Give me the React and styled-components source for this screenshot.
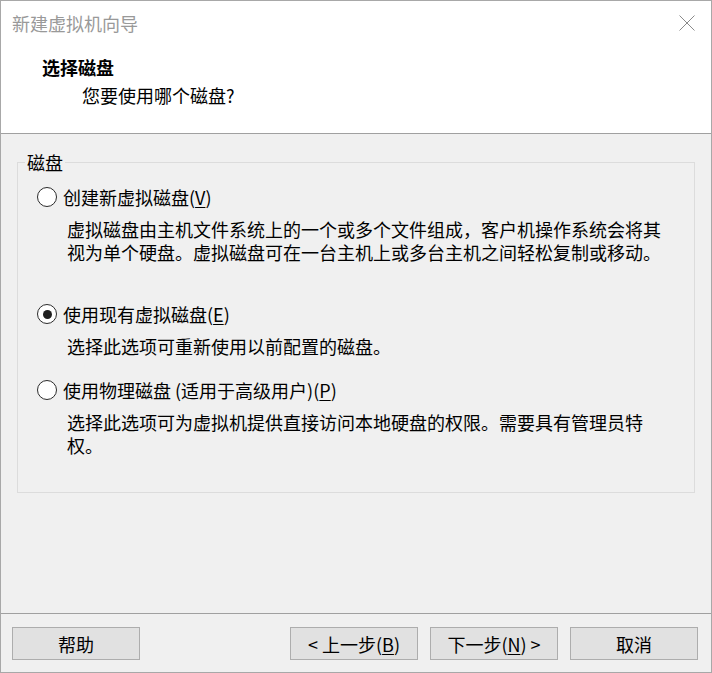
import * as React from "react"
import styled, { createGlobalStyle } from "styled-components"

const GlobalStyle = createGlobalStyle`
  html, body {
    margin: 0;
    padding: 0;
    background: #f0f0f0;
  }
  body {
    font-family: "Noto Sans CJK SC", "Liberation Sans", sans-serif;
  }
`

const FONT = `"Noto Sans CJK SC", "Liberation Sans", sans-serif`

const options = [
  {
    key: "new",
    label: "创建新虚拟磁盘",
    hotkey: "V",
    text:
      "虚拟磁盘由主机文件系统上的一个或多个文件组成，客户机操作系统会将其\n视为单个硬盘。虚拟磁盘可在一台主机上或多台主机之间轻松复制或移动。",
    gap: 38,
  },
  {
    key: "existing",
    label: "使用现有虚拟磁盘",
    hotkey: "E",
    text: "选择此选项可重新使用以前配置的磁盘。",
    gap: 20,
  },
  {
    key: "physical",
    label: "使用物理磁盘 (适用于高级用户)",
    hotkey: "P",
    text: "选择此选项可为虚拟机提供直接访问本地硬盘的权限。需要具有管理员特\n权。",
    gap: 0,
  },
]

const App = () => {
  const [selected, setSelected] = React.useState("existing")
  return (
    <>
      <GlobalStyle />
      <Window>
        <TitleBar>
          <Title>新建虚拟机向导</Title>
          <CloseButton aria-label="关闭">
            <svg width="16" height="16" viewBox="0 0 16 16">
              <path d="M0.5 0.5 L15.5 15.5 M15.5 0.5 L0.5 15.5" stroke="#8a8a8a" strokeWidth="1" fill="none" />
            </svg>
          </CloseButton>
        </TitleBar>
        <Header>
          <Heading>选择磁盘</Heading>
          <SubHeading>您要使用哪个磁盘?</SubHeading>
        </Header>
        <Body>
          <GroupBox>
            <Legend>磁盘</Legend>
            {options.map(o => (
              <Option key={o.key} $gap={o.gap}>
                <RadioRow onClick={() => setSelected(o.key)}>
                  <Radio $checked={selected === o.key} />
                  <span>
                    {o.label}(<u>{o.hotkey}</u>)
                  </span>
                </RadioRow>
                <Description>{o.text}</Description>
              </Option>
            ))}
          </GroupBox>
        </Body>
        <Footer>
          <Button>帮助</Button>
          <Spacer />
          <Button>
            &lt; 上一步(<u>B</u>)
          </Button>
          <Button>
            下一步(<u>N</u>) &gt;
          </Button>
          <Button>取消</Button>
        </Footer>
      </Window>
    </>
  )
}

const Window = styled.div`
  width: 712px;
  height: 673px;
  box-sizing: border-box;
  border: 1px solid #a8a8a8;
  display: flex;
  flex-direction: column;
  background: #f0f0f0;
  color: #000;
  font-family: ${FONT};
  font-size: 18px;
`

const TitleBar = styled.div`
  height: 44px;
  background: #fff;
  display: flex;
  align-items: center;
  justify-content: space-between;
  padding: 0 16px 0 11px;
`

const Title = styled.div`
  color: #999;
  font-size: 18px;
  line-height: 24px;
`

const CloseButton = styled.div`
  width: 16px;
  height: 16px;
  display: flex;
  margin-top: -1px;
`

const Header = styled.div`
  height: 89px;
  box-sizing: border-box;
  background: #fff;
  border-bottom: 1px solid #a0a0a0;
  padding: 10px 0 0 41px;
`

const Heading = styled.div`
  font-weight: 700;
  line-height: 24px;
`

const SubHeading = styled.div`
  line-height: 24px;
  margin: 4px 0 0 40px;
`

const Body = styled.div`
  flex: 1;
  padding: 16px 16px 0 16px;
`

const GroupBox = styled.fieldset`
  margin: 0;
  height: 343px;
  box-sizing: border-box;
  border: 1px solid #dcdcdc;
  padding: 11px 0 0 19px;
  min-width: 0;
`

const Legend = styled.legend`
  margin-left: -12px;
  padding: 0 2px;
  line-height: 24px;
`

const Option = styled.div`
  margin-bottom: ${props => props.$gap}px;
`

const RadioRow = styled.div`
  display: flex;
  align-items: center;
  gap: 6px;
  line-height: 24px;
  cursor: default;

  u {
    text-underline-offset: 2px;
  }
`

const Radio = styled.span`
  width: 20px;
  height: 20px;
  box-sizing: border-box;
  border-radius: 50%;
  border: 1.5px solid #2b2b2b;
  background: #fff;
  display: flex;
  align-items: center;
  justify-content: center;

  &::after {
    content: "";
    width: 9px;
    height: 9px;
    border-radius: 50%;
    background: #1f1f1f;
    display: ${props => (props.$checked ? "block" : "none")};
  }
`

const Description = styled.div`
  margin: 9px 0 0 30px;
  line-height: 23px;
  white-space: pre-line;
`

const Footer = styled.div`
  height: 59px;
  box-sizing: border-box;
  border-top: 1px solid #a0a0a0;
  padding: 13px 13px 0 11px;
  display: flex;
  gap: 12px;
`

const Spacer = styled.div`
  flex: 1;
`

const Button = styled.button`
  width: 128px;
  height: 33px;
  box-sizing: border-box;
  background: #e1e1e1;
  border: 1px solid #adadad;
  border-radius: 0;
  font-family: ${FONT};
  font-size: 18px;
  color: #000;
  padding: 0;
  display: flex;
  align-items: center;
  justify-content: center;

  u {
    text-underline-offset: 2px;
  }
`

export default App
